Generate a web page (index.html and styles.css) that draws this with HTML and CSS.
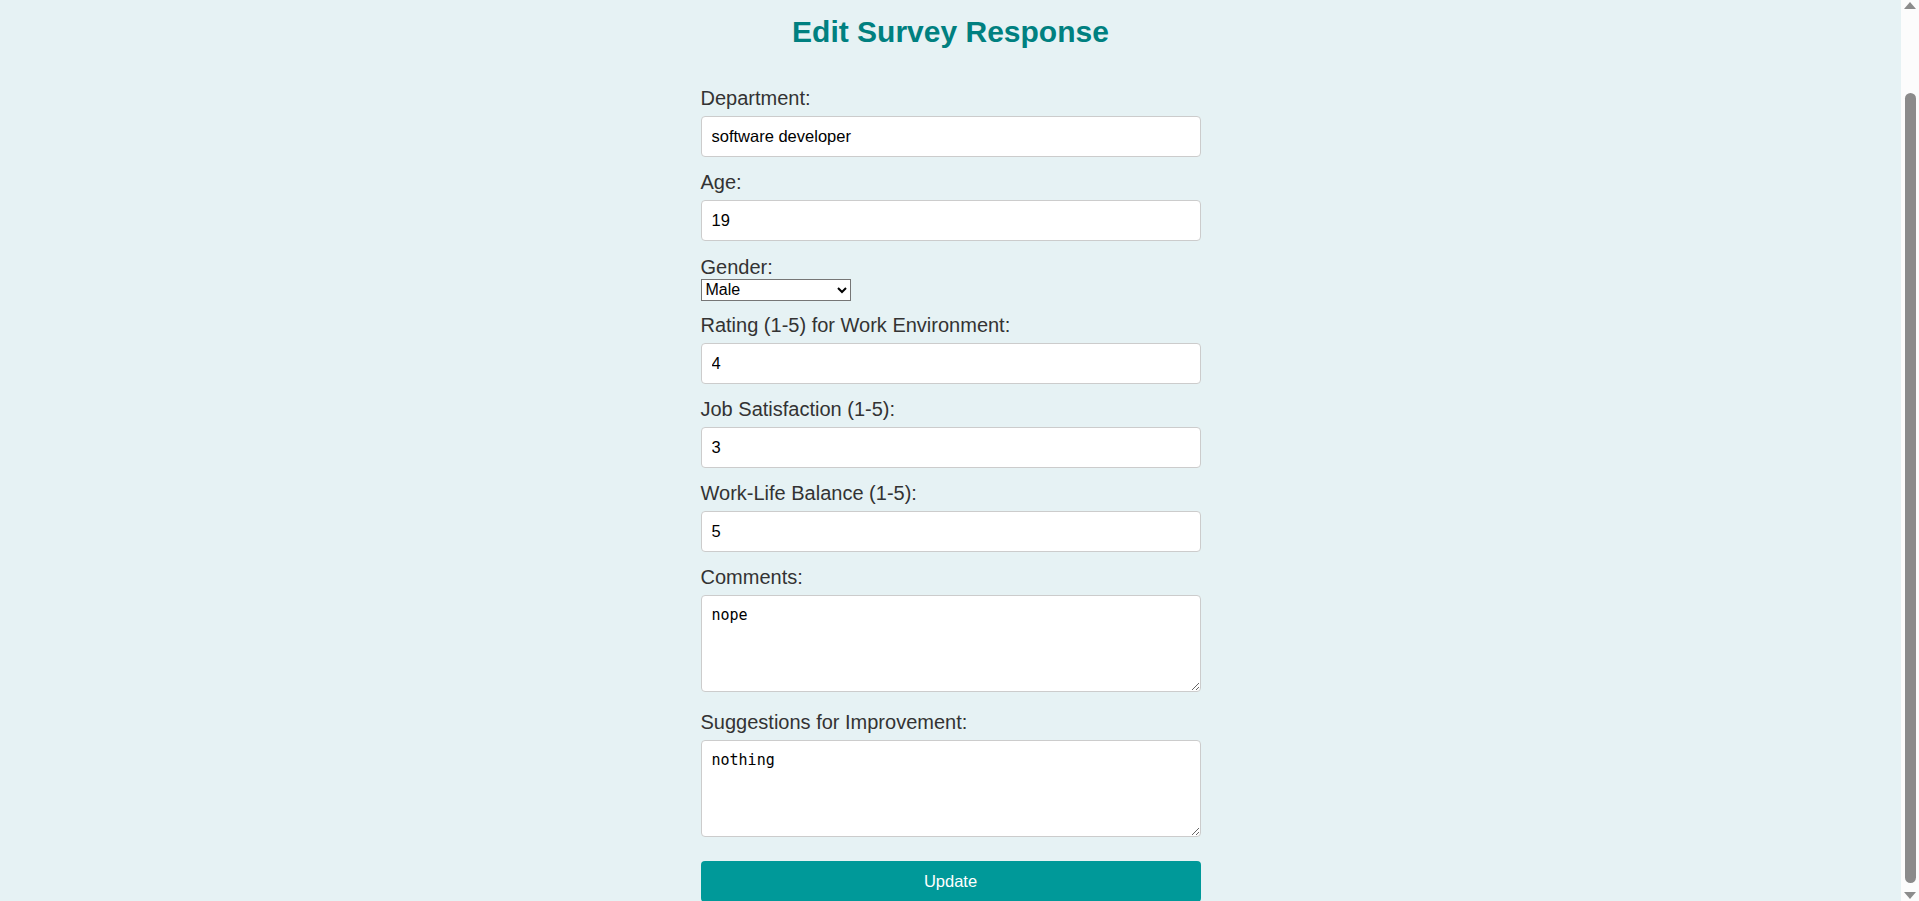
FILE: index.html
```html
<!DOCTYPE html>
<html lang="en">
<head>
<meta charset="utf-8">
<title>Edit Survey Response</title>
<link rel="stylesheet" href="styles.css">
</head>
<body>
<h1 class="title">Edit Survey Response</h1>
<form class="survey-form">
  <div class="field">
    <label class="field-label" for="department">Department:</label>
    <input class="text-input" id="department" type="text" value="software developer">
  </div>
  <div class="field">
    <label class="field-label" for="age">Age:</label>
    <input class="text-input" id="age" type="number" value="19">
  </div>
  <div class="field">
    <label class="field-label" for="gender">Gender:</label>
    <select class="select-input" id="gender">
      <option selected>Male</option>
      <option>Female</option>
      <option>Other</option>
    </select>
  </div>
  <div class="field">
    <label class="field-label" for="env">Rating (1-5) for Work Environment:</label>
    <input class="text-input" id="env" type="number" value="4">
  </div>
  <div class="field">
    <label class="field-label" for="job">Job Satisfaction (1-5):</label>
    <input class="text-input" id="job" type="number" value="3">
  </div>
  <div class="field">
    <label class="field-label" for="wlb">Work-Life Balance (1-5):</label>
    <input class="text-input" id="wlb" type="number" value="5">
  </div>
  <div class="field">
    <label class="field-label" for="comments">Comments:</label>
    <textarea class="area-input" id="comments">nope</textarea>
  </div>
  <div class="field">
    <label class="field-label" for="suggestions">Suggestions for Improvement:</label>
    <textarea class="area-input" id="suggestions">nothing</textarea>
  </div>
  <button class="submit-btn" type="submit">Update</button>
</form>
<div class="scrollbar" aria-hidden="true">
  <svg class="scroll-arrow" width="18" height="17" viewBox="0 0 18 17"><path d="M3 9 L9 2 L15 9 Z" fill="#8c8c8c"/></svg>
  <div class="scroll-track"><div class="scroll-thumb"></div></div>
  <svg class="scroll-arrow" width="18" height="17" viewBox="0 0 18 17"><path d="M3 8 L9 15 L15 8 Z" fill="#8c8c8c"/></svg>
</div>
</body>
</html>
```
FILE: styles.css
```css
body {
  margin: 0;
  padding-right: 18px;
  background: #e6f2f4;
  font-family: "Liberation Sans", Arial, sans-serif;
  color: #333;
}

.title {
  margin: 14px 0 0;
  font-size: 30px;
  line-height: 35px;
  font-weight: bold;
  text-align: center;
  color: #008080;
}

.survey-form {
  width: 500px;
  margin: 38px auto 0;
}

.field-label {
  display: block;
  font-size: 20px;
  line-height: 22px;
  color: #333;
}

.text-input {
  display: block;
  box-sizing: border-box;
  width: 100%;
  height: 41px;
  margin: 7px 0 14.3px;
  padding: 10px;
  font-family: "Liberation Sans", Arial, sans-serif;
  font-size: 16.5px;
  color: #000;
  background: #fff;
  border: 1px solid #ccc;
  border-radius: 4px;
  -moz-appearance: textfield;
  appearance: textfield;
}

.text-input::-webkit-outer-spin-button,
.text-input::-webkit-inner-spin-button {
  -webkit-appearance: none;
  margin: 0;
}

.select-input {
  display: block;
  box-sizing: border-box;
  width: 150px;
  height: 22px;
  margin: 1px 0 13px;
  font-family: "Liberation Sans", Arial, sans-serif;
  font-size: 16px;
  color: #000;
  background: #fff;
}

.area-input {
  display: block;
  box-sizing: border-box;
  width: 100%;
  height: 97px;
  margin: 7px 0 18.5px;
  padding: 10px;
  font-family: "DejaVu Sans Mono", monospace;
  font-size: 15px;
  color: #000;
  background: #fff;
  border: 1px solid #ccc;
  border-radius: 4px;
}

.submit-btn {
  display: block;
  width: 100%;
  margin-top: 24px;
  padding: 11px 10px;
  font-family: "Liberation Sans", Arial, sans-serif;
  font-size: 16.5px;
  color: #fff;
  background: #009999;
  border: none;
  border-radius: 4px;
}

.scrollbar {
  position: fixed;
  top: 0;
  right: 0;
  bottom: 0;
  width: 18px;
  display: flex;
  flex-direction: column;
  background: #fcfcfc;
}

.scroll-arrow {
  display: block;
  flex: none;
}

.scroll-track {
  flex: 1;
  display: flex;
  flex-direction: column;
  padding: 76px 0 1px;
}

.scroll-thumb {
  flex: 1;
  width: 11px;
  margin-left: 4px;
  background: #8b8b8b;
  border-radius: 6px;
}
```
